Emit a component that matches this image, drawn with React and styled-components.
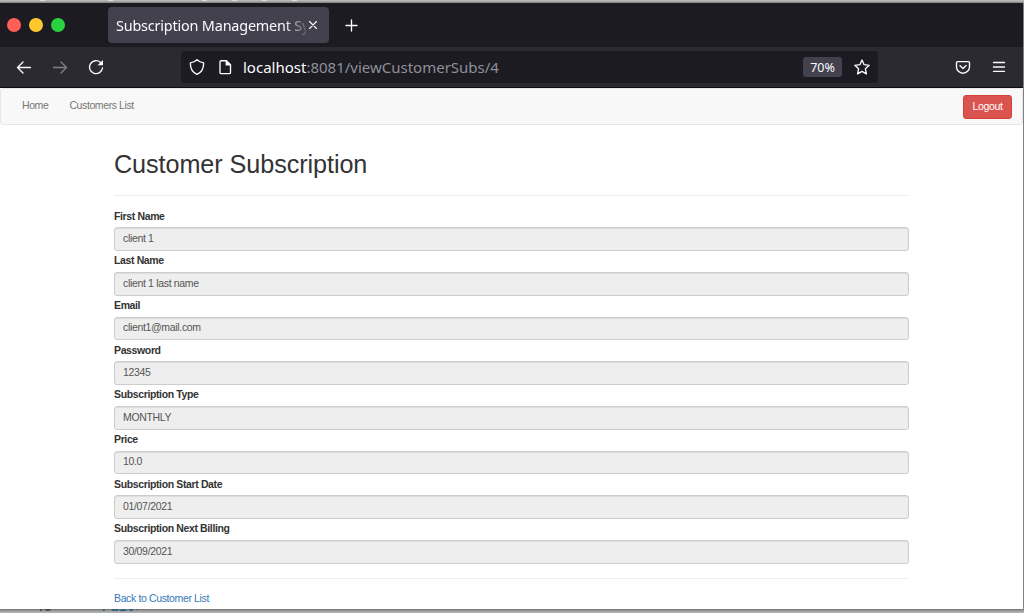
import React from "react";
import styled, { createGlobalStyle } from "styled-components";

const GlobalStyle = createGlobalStyle`
  *, *::before, *::after { box-sizing: border-box; }
  html, body { margin: 0; height: 613px; overflow: hidden; background: #b4b4b4; }
`;

const uiFont = `"Noto Sans", "Open Sans", sans-serif`;
const pageFont = `"Liberation Sans", Arial, sans-serif`;

const Desktop = styled.div`
  position: relative;
  width: 1024px;
  height: 613px;
  padding: 3px 1px 0 0;
  overflow: hidden;
  background: linear-gradient(#bdbdbd 0 1px, #a4a4a4 2px 3px, #989898 3px 609px, #8e8e8e 609px, #b9b9b9 613px);
`;

const EditorStrip = styled.div`
  display: flex;
  align-items: flex-end;
  height: 4px;
  padding-left: 35px;
  gap: 50px;
  overflow: hidden;
  font: 700 14px/16px "Liberation Mono", monospace;
  white-space: pre;
`;

const CodeText = styled.span`
  margin-bottom: -2px;
  color: ${(p) => p.$color};
`;

const TopStub = styled.span`
  position: absolute;
  left: ${(p) => p.$x}px;
  top: 0;
  width: 5px;
  height: 1px;
  background: #dedede;
`;

const BrowserWindow = styled.div`
  display: flex;
  flex-direction: column;
  height: 606px;
  background: #fff;
  box-shadow: 0 0 3px rgba(0, 0, 0, 0.4);
`;

const TitleBar = styled.div`
  display: flex;
  align-items: center;
  height: 44px;
  flex: none;
  padding-left: 7px;
  background: #1c1b22;
`;

const Lights = styled.div`
  display: flex;
  gap: 8px;
  width: 101px;
`;

const Light = styled.span`
  width: 14px;
  height: 14px;
  border-radius: 50%;
  background: ${(p) => p.$color};
`;

const Tab = styled.div`
  display: flex;
  align-items: center;
  width: 221px;
  height: 36px;
  padding: 0 9px 0 8px;
  border-radius: 4px;
  background: #42414d;
`;

const TabTitle = styled.span`
  width: 190px;
  overflow: hidden;
  white-space: nowrap;
  font: 14.4px/20px ${uiFont};
  letter-spacing: -0.18px;
  padding-top: 1px;
  color: #fbfbfe;
  mask-image: linear-gradient(to right, #000 168px, transparent 194px);
`;

const Icon = styled.svg`
  display: block;
  flex: none;
  width: ${(p) => p.$size || 16}px;
  height: ${(p) => p.$size || 16}px;
  margin-left: ${(p) => p.$gap || 0}px;
  fill: none;
  stroke: #fbfbfe;
  stroke-width: ${(p) => p.$weight || 1.35};
  stroke-linecap: round;
  stroke-linejoin: round;
  opacity: ${(p) => (p.$dim ? 0.4 : 1)};
`;

const Toolbar = styled.div`
  display: flex;
  align-items: center;
  height: 41px;
  flex: none;
  padding: 0 16px 1px;
  border-bottom: 1px solid #0c0c0d;
  background: #2b2a33;
`;

const NavButtons = styled.div`
  display: flex;
  gap: 20px;
  width: 165px;
`;

const UrlBar = styled.div`
  display: flex;
  align-items: center;
  width: 697px;
  height: 32px;
  padding: 0 8px;
  border-radius: 4px;
  background: #1c1b22;
`;

const Url = styled.span`
  flex: 1;
  margin-left: 10px;
  font: 15px/20px ${uiFont};
  color: #8f8f98;
  white-space: nowrap;
  b { font-weight: 400; color: #fbfbfe; }
`;

const Zoom = styled.span`
  width: 39px;
  height: 20px;
  border-radius: 3px;
  background: #42414d;
  color: #fbfbfe;
  font: 12.5px/21px ${uiFont};
  text-align: center;
`;

const Navbar = styled.nav`
  display: flex;
  flex: none;
  height: 37px;
  padding: 6px 10px 0 21px;
  border: 1px solid #e7e7e7;
  border-radius: 3px;
  background: #f8f8f8;
  font: 10.5px/14px ${pageFont};
  letter-spacing: -0.4px;
`;

const NavLink = styled.a`
  margin: 3px 21px 0 0;
  color: #777;
`;

const Logout = styled.button`
  height: 24px;
  width: 49px;
  margin-left: auto;
  padding: 0 0 3px;
  border: 1px solid #d43f3a;
  border-radius: 3px;
  background: #d9534f;
  color: #fff;
  font: 10.5px/14px ${pageFont};
  letter-spacing: -0.35px;
`;

const Content = styled.main`
  width: 795px;
  margin-left: 114px;
  font: 10.5px/14px ${pageFont};
  letter-spacing: -0.37px;
  color: #333;
`;

const Heading = styled.h1`
  margin: 25px 0 0;
  font: 400 25.2px/28px ${pageFont};
  letter-spacing: -0.07px;
`;

const Rule = styled.hr`
  height: 1px;
  margin: ${(p) => p.$top}px 0 13.7px;
  border: 0;
  background: #eee;
`;

const Field = styled.div`
  height: 44.67px;
`;

const Label = styled.label`
  display: block;
  height: 17.6px;
  font-weight: 700;
  line-height: 12px;
`;

const Input = styled.input`
  display: block;
  width: 100%;
  height: 23.8px;
  padding: 0 8px 2.3px;
  border: 1px solid #ccc;
  border-radius: 3px;
  background: #eee;
  box-shadow: inset 0 1px 1px rgba(0, 0, 0, 0.075);
  color: #555;
  font: 10.5px/14px ${pageFont};
  letter-spacing: -0.33px;
  outline: 0;
`;

const BackLink = styled.a`
  display: block;
  margin-top: -2px;
  color: #337ab7;
`;

const fields = [
  ["First Name", "client 1"],
  ["Last Name", "client 1 last name"],
  ["Email", "client1@mail.com"],
  ["Password", "12345"],
  ["Subscription Type", "MONTHLY"],
  ["Price", "10.0"],
  ["Subscription Start Date", "01/07/2021"],
  ["Subscription Next Billing", "30/09/2021"],
];

export default function App() {
  return (
    <>
      <GlobalStyle />
      <Desktop>
        {[40, 108, 202, 232, 262, 292].map((x) => <TopStub key={x} $x={x} />)}
        <BrowserWindow>
          <TitleBar>
            <Lights>
              <Light $color="#ff5f57" />
              <Light $color="#ffc72e" />
              <Light $color="#28d33f" />
            </Lights>
            <Tab>
              <TabTitle>Subscription Management Sy</TabTitle>
              <Icon $size={14} $weight={1.1} viewBox="0 0 14 14">
                <path d="M3.500 3.500l7 7M10.500 3.500l-7 7" />
              </Icon>
            </Tab>
            <Icon $gap={14} viewBox="0 0 16 16">
              <path d="M8.500 3v11M3 8.500h11" />
            </Icon>
          </TitleBar>
          <Toolbar>
            <NavButtons>
              <Icon viewBox="0 0 16 16"><path d="M14.500 8.500h-13M7 3L1.500 8.500 7 14" /></Icon>
              <Icon $dim viewBox="0 0 16 16"><path d="M1.500 8.500h13M9 3l5.500 5.500L9 14" /></Icon>
              <Icon viewBox="0 0 16 16">
                <path d="M12.300 3.200A6.500 6.500 0 1 0 14.500 9" />
                <path d="M15 1v5.200H9.500z" fill="#fbfbfe" stroke="none" />
              </Icon>
            </NavButtons>
            <UrlBar>
              <Icon viewBox="0 0 16 16">
                <path d="M8 .7c1.900 1.900 3.800 2.700 6.600 3.200.2 5-1.500 9.100-6.600 11.400C2.900 13 1.200 8.900 1.400 3.900 4.200 3.400 6.100 2.600 8 .7z" />
              </Icon>
              <Icon $gap={12} viewBox="0 0 16 16">
                <path d="M4.200 1.700h5.100l4.200 4.200v7.500a1.200 1.200 0 0 1-1.200 1.200H4.200A1.200 1.200 0 0 1 3 13.400V2.900a1.200 1.200 0 0 1 1.200-1.200z" />
                <path d="M9.300 1.700v4.200h4.200z" fill="#fbfbfe" />
              </Icon>
              <Url><b>localhost</b>:8081/viewCustomerSubs/4</Url>
              <Zoom>70%</Zoom>
              <Icon $gap={12} viewBox="0 0 16 16">
                <path d="M8 1l2.100 4.700 5.100.6-3.800 3.500 1 5.100L8 12.400l-4.400 2.500 1-5.100L.8 6.300l5.100-.6z" />
              </Icon>
            </UrlBar>
            <Icon $gap={77} viewBox="0 0 16 16">
              <path d="M2.600 2.600h10.800a1.100 1.100 0 0 1 1.100 1.100v4a6.500 6.500 0 0 1-13 0v-4a1.100 1.100 0 0 1 1.100-1.100z" />
              <path d="M4.900 6.600L8 9.500l3.100-2.900" />
            </Icon>
            <Icon $gap={20} viewBox="0 0 16 16">
              <path d="M2.500 3.500h11M2.500 8h11M2.500 12.300h11" />
            </Icon>
          </Toolbar>
          <Navbar>
            <NavLink>Home</NavLink>
            <NavLink>Customers List</NavLink>
            <Logout>Logout</Logout>
          </Navbar>
          <Content>
            <Heading>Customer Subscription</Heading>
            <Rule $top={17} />
            {fields.map(([label, value]) => (
              <Field key={label}>
                <Label>{label}</Label>
                <Input value={value} readOnly />
              </Field>
            ))}
            <Rule $top={11.2} />
            <BackLink>Back to Customer List</BackLink>
          </Content>
        </BrowserWindow>
        <EditorStrip>
          <CodeText $color="#4a4a4a">43</CodeText>
          <CodeText $color="#225f80">{"/div>"}</CodeText>
        </EditorStrip>
      </Desktop>
    </>
  );
}
